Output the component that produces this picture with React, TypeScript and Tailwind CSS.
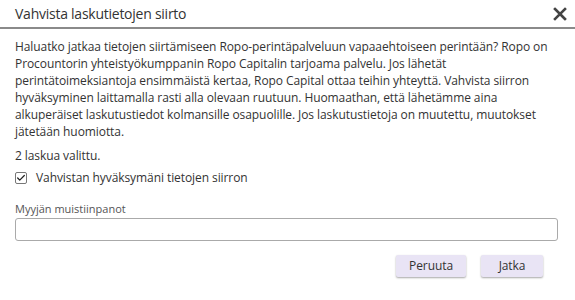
import { Check } from "lucide-react";

const lines = [
  "Haluatko jatkaa tietojen siirtämiseen Ropo-perintäpalveluun vapaaehtoiseen perintään? Ropo on",
  "Procountorin yhteistyökumppanin Ropo Capitalin tarjoama palvelu. Jos lähetät",
  "perintätoimeksiantoja ensimmäistä kertaa, Ropo Capital ottaa teihin yhteyttä. Vahvista siirron",
  "hyväksyminen laittamalla rasti alla olevaan ruutuun. Huomaathan, että lähetämme aina",
  "alkuperäiset laskutustiedot kolmansille osapuolille. Jos laskutustietoja on muutettu, muutokset",
  "jätetään huomiotta.",
];

export default function App() {
  return (
    <div className="h-[300px] w-[575px] bg-white font-['Open_Sans',sans-serif] text-[#333]">
      {/* header */}
      <div className="flex h-[29px] items-center justify-between border-b-2 border-[#8a8a8a] pl-[15px] pr-[8px]">
        <h1 className="text-[14px] leading-none tracking-[-0.25px] text-[#333]">Vahvista laskutietojen siirto</h1>
        <svg viewBox="0 0 14 14" className="h-[14px] w-[14px]" aria-label="Sulje">
          <path d="M2 2 L12 12 M12 2 L2 12" stroke="#444" strokeWidth="2.6" strokeLinecap="square" />
        </svg>
      </div>

      <div className="px-[15px] pt-[9px] text-[12px] tracking-[-0.08px]">
        <p className="leading-[17px]">
          {lines.map((l) => (
            <span key={l} className="block whitespace-nowrap">
              {l}
            </span>
          ))}
        </p>

        <p className="mt-[8px] leading-[16px]">2 laskua valittu.</p>

        <label className="mt-[6px] flex items-center gap-[9px] leading-[16px]">
          <span className="flex h-[12px] w-[12px] items-center justify-center rounded-[2px] border border-[#777] bg-white">
            <Check className="h-[10px] w-[10px] text-[#222]" strokeWidth={3} />
          </span>
          Vahvistan hyväksymäni tietojen siirron
        </label>

        <div className="mt-[16px] text-[11px] leading-[14px] tracking-normal text-[#555]">Myyjän muistiinpanot</div>
        <input
          type="text"
          aria-label="Myyjän muistiinpanot"
          className="mt-[2px] block h-[23px] w-[543px] rounded-[3px] border border-[#aaa] bg-white px-2 text-[12px] outline-none"
        />

        <div className="mt-[14px] flex justify-end gap-[15px] pr-[17px]">
          <button className="h-[22px] w-[70px] rounded-[2px] bg-[#e9e4f5] text-[12px] text-[#333] shadow-[0_1px_2px_rgba(0,0,0,0.35)]">
            Peruuta
          </button>
          <button className="h-[22px] w-[62px] rounded-[2px] bg-[#e9e4f5] text-[12px] text-[#333] shadow-[0_1px_2px_rgba(0,0,0,0.35)]">
            Jatka
          </button>
        </div>
      </div>
    </div>
  );
}
